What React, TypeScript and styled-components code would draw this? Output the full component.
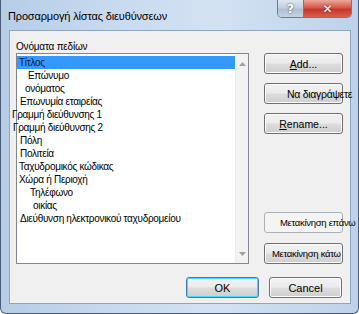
import React from 'react';
import styled, { createGlobalStyle } from 'styled-components';

const GlobalStyle = createGlobalStyle`
  html, body {
    margin: 0;
    padding: 0;
    background: #ffffff;
  }
  body {
    font-family: 'Liberation Sans', Arial, sans-serif;
  }
`;

const Window = styled.div`
  width: 359px;
  height: 314px;
  box-sizing: border-box;
  display: flex;
  flex-direction: column;
  background: linear-gradient(90deg, #b6cde8 0%, #c9dbf0 35%, #d3e2f3 60%, #bdd2ea 100%);
  border: 1px solid #4a5d75;
  border-top: none;
  border-radius: 0 0 6px 6px;
  overflow: hidden;
`;

const TitleBar = styled.div`
  height: 30px;
  flex: 0 0 30px;
  display: flex;
  align-items: flex-start;
  padding: 0 6px 0 7px;
`;

const Title = styled.div`
  margin-top: 10px;
  font-size: 11px;
  letter-spacing: -0.15px;
  color: #000;
  white-space: nowrap;
`;

const Controls = styled.div`
  margin-left: auto;
  display: flex;
  border: 1px solid #6b7b90;
  border-top: none;
  border-radius: 0 0 5px 5px;
  overflow: hidden;
  height: 17px;
`;

const CaptionButton = styled.div<{ $close?: boolean }>`
  width: ${p => (p.$close ? 47 : 25)}px;
  height: 17px;
  display: flex;
  align-items: center;
  justify-content: center;
  font-family: 'DejaVu Sans', sans-serif;
  font-weight: bold;
  font-size: 12px;
  color: #fff;
  text-shadow: 0 0 2px #333;
  background: ${p =>
    p.$close
      ? 'linear-gradient(180deg, #e9a99c 0%, #d9574a 45%, #c7352a 55%, #d4604e 100%)'
      : 'linear-gradient(180deg, #dfe7f1 0%, #c3d0e0 45%, #afbfd3 55%, #c6d3e2 100%)'};
  border-left: ${p => (p.$close ? '1px solid #6b7b90' : 'none')};
`;

const Client = styled.div`
  flex: 1;
  margin: 0 7px 9px 8px;
  background: #f0f0f0;
  border: 1px solid #8fa4bd;
  display: flex;
  flex-direction: column;
  padding: 9px 7px 0 6px;
`;

const Label = styled.div`
  font-size: 10px;
  letter-spacing: -0.2px;
  line-height: 13px;
  height: 13px;
  color: #000;
`;

const Body = styled.div`
  display: flex;
  gap: 15px;
`;

const ListBox = styled.div`
  width: 235px;
  height: 211px;
  box-sizing: border-box;
  border: 1px solid #828790;
  background: #fff;
  display: flex;
`;

const Items = styled.div`
  flex: 1;
  padding-top: 2px;
  min-width: 0;
`;

const Item = styled.div<{ $selected?: boolean; $x: number }>`
  height: 13px;
  line-height: 13px;
  font-size: 10px;
  letter-spacing: -0.3px;
  color: ${p => (p.$selected ? '#101830' : '#000')};
  background: ${p => (p.$selected ? '#3399ff' : 'transparent')};
  white-space: nowrap;
  & > span {
    display: inline-block;
    margin-left: ${p => p.$x - 16}px;
  }
`;

const ScrollBar = styled.div`
  width: 12px;
  background: #f2f2f2;
  border-left: 1px solid #ececec;
  display: flex;
  flex-direction: column;
  justify-content: space-between;
  align-items: center;
  padding: 8px 0 7px;
`;

const Side = styled.div`
  width: 79px;
  display: flex;
  flex-direction: column;
`;

const Button = styled.button<{ $pad?: number; $flat?: boolean; $default?: boolean }>`
  height: 21px;
  width: 79px;
  box-sizing: border-box;
  padding: 0 0 0 ${p => p.$pad ?? 0}px;
  display: flex;
  align-items: center;
  justify-content: ${p => (p.$pad !== undefined ? 'flex-start' : 'center')};
  font-family: 'Liberation Sans', Arial, sans-serif;
  font-size: 10.5px;
  color: #000;
  white-space: nowrap;
  overflow: visible;
  border-radius: 3px;
  border: 1px solid ${p => (p.$flat ? '#adb2b5' : p.$default ? '#3c7fb1' : '#707070')};
  background: ${p =>
    p.$flat
      ? '#f4f4f4'
      : 'linear-gradient(180deg, #f2f2f2 0%, #ebebeb 49%, #dddddd 51%, #cfcfcf 100%)'};
  box-shadow: ${p =>
    p.$default ? 'inset 0 0 0 1px #48d8fb' : p.$flat ? 'none' : 'inset 0 0 0 1px #fcfcfc'};
  & u {
    text-decoration: underline;
  }
`;

const SmallLabel = styled.span<{ $size?: number }>`
  font-size: ${p => p.$size ?? 9.5}px;
  letter-spacing: -0.3px;
`;

const Gap = styled.div<{ $h: number }>`
  height: ${p => p.$h}px;
  flex: 0 0 auto;
`;

const Spacer = styled.div`
  flex: 1;
`;

const Footer = styled.div`
  display: flex;
  justify-content: flex-end;
  gap: 10px;
  margin-top: 13px;
  padding-right: 1px;
`;

const FooterButton = styled(Button)`
  width: 73px;
  font-size: 11px;
`;

const Arrow = ({ down }: { down?: boolean }) => (
  <svg width="7" height="4" viewBox="0 0 7 4">
    <path d={down ? 'M0 0 L7 0 L3.5 4 Z' : 'M0 4 L7 4 L3.5 0 Z'} fill="#a0a0a0" />
  </svg>
);

const fields: { name: string; x: number }[] = [
  { name: 'Τίτλος', x: 18 },
  { name: 'Επώνυμο', x: 27 },
  { name: 'ονόματος', x: 24 },
  { name: 'Επωνυμία εταιρείας', x: 19 },
  { name: 'Γραμμή διεύθυνσης 1', x: 11 },
  { name: 'Γραμμή διεύθυνσης 2', x: 12 },
  { name: 'Πόλη', x: 19 },
  { name: 'Πολιτεία', x: 19 },
  { name: 'Ταχυδρομικός κώδικας', x: 18 },
  { name: 'Χώρα ή Περιοχή', x: 18 },
  { name: 'Τηλέφωνο', x: 29 },
  { name: 'οικίας', x: 32 },
  { name: 'Διεύθυνση ηλεκτρονικού ταχυδρομείου', x: 19 },
];

export default function App() {
  return (
    <>
      <GlobalStyle />
      <Window>
        <TitleBar>
          <Title>Προσαρμογή λίστας διευθύνσεων</Title>
          <Controls>
            <CaptionButton>?</CaptionButton>
            <CaptionButton $close>✕</CaptionButton>
          </Controls>
        </TitleBar>
        <Client>
          <Label>Ονόματα πεδίων</Label>
          <Body>
            <ListBox>
              <Items>
                {fields.map((f, i) => (
                  <Item key={f.name} $selected={i === 0} $x={f.x}>
                    <span>{f.name}</span>
                  </Item>
                ))}
              </Items>
              <ScrollBar>
                <Arrow />
                <Arrow down />
              </ScrollBar>
            </ListBox>
            <Side>
              <Button>
                <span><u>A</u>dd...</span>
              </Button>
              <Gap $h={9} />
              <Button $pad={22}>
                <SmallLabel $size={10.5}>Να διαγράψετε</SmallLabel>
              </Button>
              <Gap $h={9} />
              <Button>
                <span><u>R</u>ename...</span>
              </Button>
              <Spacer />
              <Button $pad={15} $flat>
                <SmallLabel>Μετακίνηση επάνω</SmallLabel>
              </Button>
              <Gap $h={10} />
              <Button $pad={7}>
                <SmallLabel>Μετακίνηση κάτω</SmallLabel>
              </Button>
            </Side>
          </Body>
          <Footer>
            <FooterButton $default>OK</FooterButton>
            <FooterButton>Cancel</FooterButton>
          </Footer>
        </Client>
      </Window>
    </>
  );
}
